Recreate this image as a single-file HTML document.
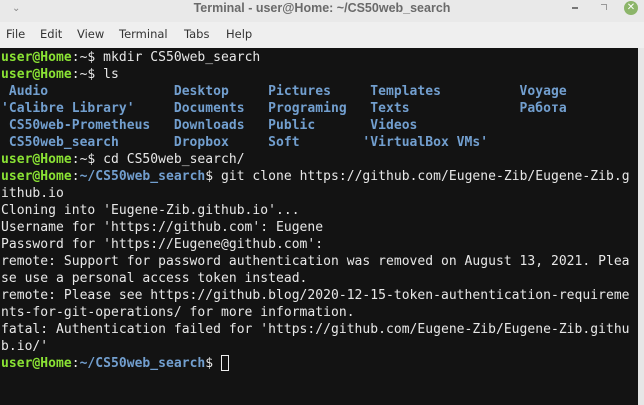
<!DOCTYPE html>
<html><head><meta charset="utf-8"><style>
html,body{margin:0;padding:0;width:644px;height:405px;overflow:hidden;background:#ececec;}
#title{position:absolute;left:0;top:0;width:644px;height:22px;background:#e9e9e9;font-family:"Liberation Sans","DejaVu Sans",sans-serif;font-size:12.5px;font-weight:bold;color:#6a6a6a;text-align:center;line-height:16px;}
#menu{position:absolute;left:0;top:22px;width:644px;height:26px;background:#efefef;font-family:"DejaVu Sans",sans-serif;font-size:11.5px;color:#333;}
#menu span{position:absolute;top:5px;}
#term{position:absolute;left:0;top:48px;width:638px;height:357px;background:#131313;overflow:hidden;}
#sb{position:absolute;left:638px;top:48px;width:6px;height:357px;background:#e6e6e6;}
pre{margin:0;position:absolute;left:1px;top:1px;font-family:"DejaVu Sans Mono",monospace;font-size:13px;line-height:17px;letter-spacing:0.03px;color:#e8e8e8;white-space:pre;}
.g{color:#8ae234;font-weight:bold}
.b{color:#729fcf;font-weight:bold}
.cur{display:inline-block;width:8px;height:16px;border:1px solid #eee;box-sizing:border-box;vertical-align:-4px;}
</style></head><body>
<div id="title"><span style="position:absolute;left:12px;top:1px;color:#888;font-weight:normal;font-size:10px;">&#8964;</span><span style="position:absolute;left:0;right:0;top:0px;">Terminal - user@Home: ~/CS50web_search</span>
<span style="position:absolute;left:572px;top:7px;width:6px;height:2px;background:#777;"></span>
<span style="position:absolute;left:601px;top:4px;width:5px;height:5px;border-top:1px solid #999;border-right:1px solid #999;"></span>
<span style="position:absolute;left:624px;top:1px;width:14px;height:14px;border-radius:50%;background:#8cb56a;color:#fff;font-size:10px;line-height:14px;">&#10005;</span></div>
<div id="menu"><span style="left:6px">File</span><span style="left:40px">Edit</span><span style="left:77px">View</span><span style="left:119px">Terminal</span><span style="left:184px">Tabs</span><span style="left:226px">Help</span></div>
<div id="term"><pre><span class="g">user@Home</span>:~$ mkdir CS50web_search
<span class="g">user@Home</span>:~$ ls
<span class="b"> Audio                Desktop     Pictures     Templates          Voyage</span>
<span class="b">'Calibre Library'     Documents   Programing   Texts              Работа</span>
<span class="b"> CS50web-Prometheus   Downloads   Public       Videos</span>
<span class="b"> CS50web_search       Dropbox     Soft        'VirtualBox VMs'</span>
<span class="g">user@Home</span>:~$ cd CS50web_search/
<span class="g">user@Home</span>:<span class="b">~/CS50web_search</span>$ git clone https://github.com/Eugene-Zib/Eugene-Zib.g
ithub.io
Cloning into 'Eugene-Zib.github.io'...
Username for 'https://github.com': Eugene
Password for 'https://Eugene@github.com':
remote: Support for password authentication was removed on August 13, 2021. Plea
se use a personal access token instead.
remote: Please see https://github.blog/2020-12-15-token-authentication-requireme
nts-for-git-operations/ for more information.
fatal: Authentication failed for 'https://github.com/Eugene-Zib/Eugene-Zib.githu
b.io/'
<span class="g">user@Home</span>:<span class="b">~/CS50web_search</span>$ <span class="cur"></span></pre></div>
<div id="sb"></div>
</body></html>
